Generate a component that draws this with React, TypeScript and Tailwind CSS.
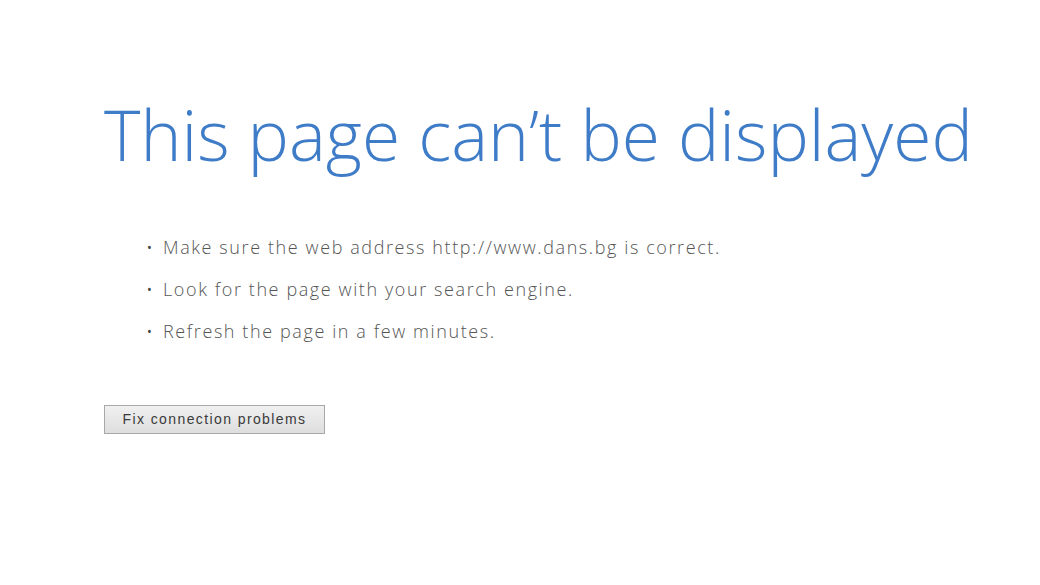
export default function App() {
  const items = [
    "Make sure the web address http://www.dans.bg is correct.",
    "Look for the page with your search engine.",
    "Refresh the page in a few minutes.",
  ];
  return (
    <div className="w-[1040px] h-[585px] bg-white overflow-hidden">
      <div className="pl-[104px] pt-[92px]">
        <h1
          className="text-[69.5px] leading-[84px] text-[#3f7cc8] font-light whitespace-nowrap"
          style={{ fontFamily: '"Open Sans", sans-serif' }}
        >
          This page can’t be displayed
        </h1>
        <ul
          className="mt-[59px] ml-[42px] flex flex-col gap-[18px] text-[18px] leading-[24px] tracking-[1.6px] text-[#555] whitespace-nowrap"
          style={{ fontFamily: '"Open Sans", sans-serif', fontWeight: 300 }}
        >
          {items.map((t) => (
            <li key={t} className="flex items-center">
              <span className="w-[17px] text-[#444] tracking-normal">•</span>
              <span>{t}</span>
            </li>
          ))}
        </ul>
        <button
          className="mt-[62px] w-[221px] h-[29px] border border-[#a8a8a8] bg-gradient-to-b from-[#f0f0f0] to-[#dedede] text-[14px] tracking-[1.4px] text-[#3a3a3a]"
          style={{ fontFamily: '"Liberation Sans", Arial, sans-serif' }}
        >
          Fix connection problems
        </button>
      </div>
    </div>
  );
}
